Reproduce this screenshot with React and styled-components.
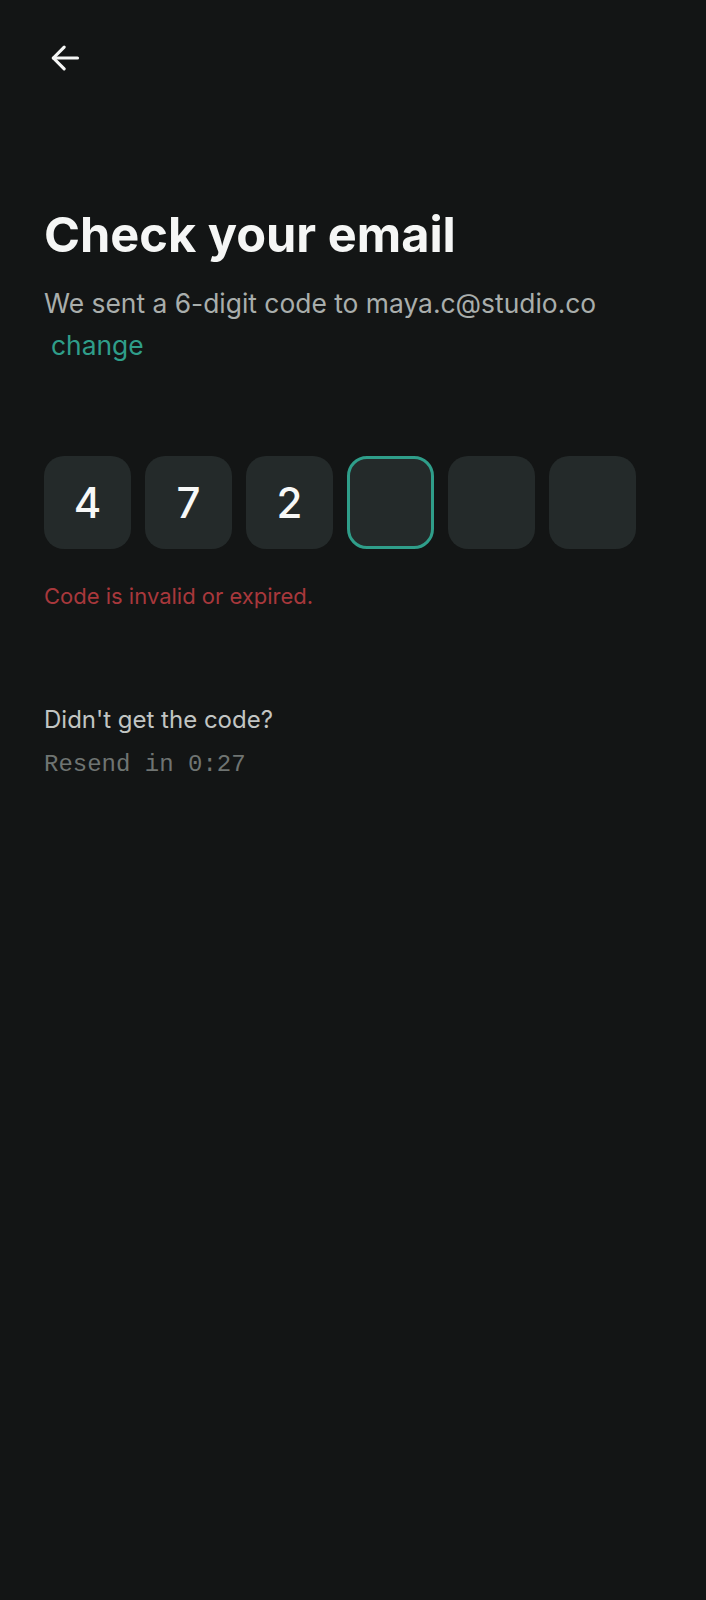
import React from 'react';
import styled, { createGlobalStyle } from 'styled-components';

const GlobalStyle = createGlobalStyle`
    html, body {
        margin: 0;
        padding: 0;
        background: #131515;
    }
    body {
        font-family: Inter, "Noto Sans", "Liberation Sans", sans-serif;
        -webkit-font-smoothing: antialiased;
    }
`;

const Screen = styled.div`
    min-height: 1600px;
    box-sizing: border-box;
    padding: 38px 44px;
    background: #131515;
    color: #f5f6f5;
`;

const BackButton = styled.button`
    display: flex;
    align-items: center;
    justify-content: center;
    width: 40px;
    height: 40px;
    margin-left: 1px;
    padding: 0;
    border: none;
    background: none;
    color: #f5f6f5;
    cursor: pointer;
`;

const Title = styled.h1`
    margin: 128px 0 0;
    font-size: 48.7px;
    font-weight: 700;
    line-height: 1.2;
    color: #f5f6f5;
`;

const Subtitle = styled.p`
    margin: 18px 0 0;
    font-size: 26.4px;
    line-height: 42px;
    color: #a9aeac;
`;

const ChangeLink = styled.a`
    display: inline-block;
    margin-left: 7px;
    color: #2f9e8a;
    text-decoration: none;
    cursor: pointer;
`;

const CodeRow = styled.div`
    display: flex;
    gap: 14px;
    margin-top: 90px;
`;

const CodeCell = styled.div`
    display: flex;
    align-items: center;
    justify-content: center;
    box-sizing: border-box;
    width: 87px;
    height: 93px;
    border-radius: 20px;
    background: #242a2a;
    border: 3px solid ${props => (props.active ? '#2f9e8a' : 'transparent')};
    font-size: 42px;
    font-weight: 500;
    color: #f7f8f7;
`;

const ErrorText = styled.p`
    margin: 34px 0 0;
    font-size: 22px;
    color: #a8383c;
`;

const ResendBlock = styled.div`
    margin-top: 96px;
    display: flex;
    flex-direction: column;
    gap: 17px;
`;

const ResendQuestion = styled.span`
    font-size: 24px;
    color: #c2c5c3;
`;

const ResendTimer = styled.span`
    font-family: "Liberation Mono", "DejaVu Sans Mono", monospace;
    font-size: 24px;
    color: #6f7472;
`;

const code = ['4', '7', '2', '', '', ''];

const ArrowLeft = () => (
    <svg width="40" height="40" viewBox="0 0 24 24" fill="none" stroke="currentColor" strokeWidth="1.9" strokeLinecap="round" strokeLinejoin="round">
        <path d="M19.5 12H5" />
        <path d="M11.5 5.5L5 12l6.5 6.5" />
    </svg>
);

const App = () => {
    return (
        <>
            <GlobalStyle />
            <Screen>
                <BackButton aria-label="Back">
                    <ArrowLeft />
                </BackButton>

                <Title>Check your email</Title>
                <Subtitle>
                    We sent a 6-digit code to maya.c@studio.co <ChangeLink>change</ChangeLink>
                </Subtitle>

                <CodeRow>
                    {code.map((digit, i) => (
                        <CodeCell key={i} active={i === 3}>{digit}</CodeCell>
                    ))}
                </CodeRow>

                <ErrorText>Code is invalid or expired.</ErrorText>

                <ResendBlock>
                    <ResendQuestion>Didn't get the code?</ResendQuestion>
                    <ResendTimer>Resend in 0:27</ResendTimer>
                </ResendBlock>
            </Screen>
        </>
    );
};

export default App;
